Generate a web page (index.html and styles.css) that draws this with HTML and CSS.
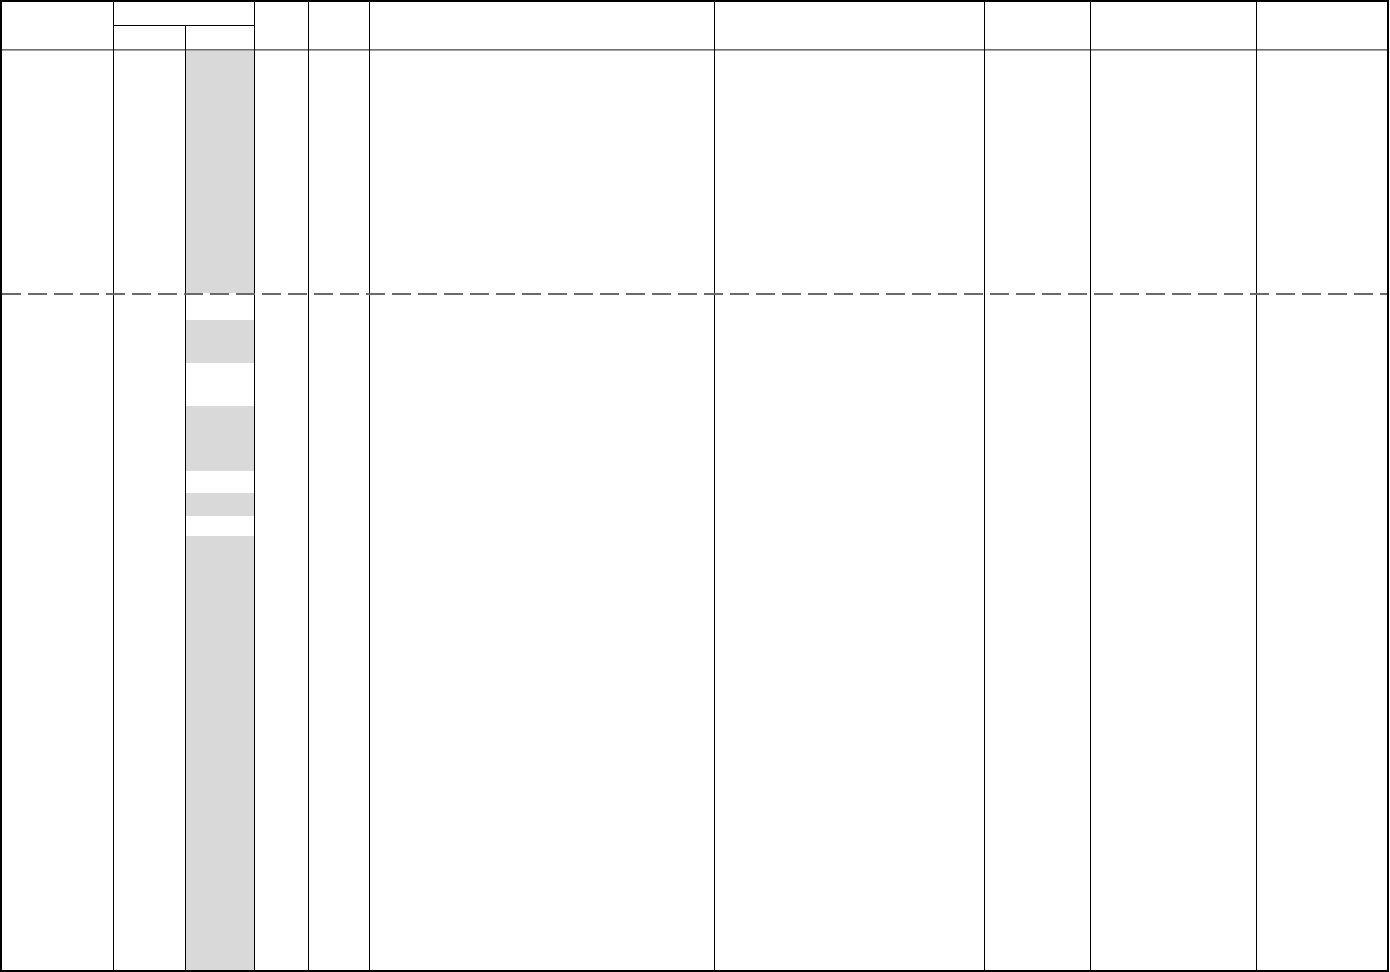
FILE: index.html
```html
<!DOCTYPE html>
<html lang="en">
<head>
    <meta charset="UTF-8">
    <meta name="viewport" content="width=device-width, initial-scale=1.0">
    <title>Sheet</title>
    <link rel="stylesheet" href="styles.css">
</head>
<body>
    <div id="sheet">
        <div class="headGrid">
            <div class="hcell tall first"></div>
            <div class="hcell group"></div>
            <div class="hcell tall"></div>
            <div class="hcell tall"></div>
            <div class="hcell tall"></div>
            <div class="hcell tall"></div>
            <div class="hcell tall"></div>
            <div class="hcell tall"></div>
            <div class="hcell tall"></div>
            <div class="hcell sub"></div>
            <div class="hcell sub"></div>
        </div>

        <div class="bodyGrid">
            <div class="col first"></div>
            <div class="col"></div>
            <div class="col shade">
                <div class="band"></div>
                <div class="band on"></div>
                <div class="band"></div>
                <div class="band on"></div>
                <div class="band"></div>
                <div class="band on"></div>
                <div class="band"></div>
                <div class="band on"></div>
                <div class="band"></div>
                <div class="band on"></div>
            </div>
            <div class="col"></div>
            <div class="col"></div>
            <div class="col"></div>
            <div class="col"></div>
            <div class="col"></div>
            <div class="col"></div>
            <div class="col"></div>
        </div>

        <div class="cutLine"></div>
    </div>
</body>
</html>
```

FILE: styles.css
```css
*{
    box-sizing: border-box;
}

body{
    margin: 0;
    padding: 0;
    background-color: #ffffff;
    font-family: 'Liberation Sans', Arial, sans-serif;
}

#sheet{
    position: relative;
    width: 1389px;
    height: 972px;
    border: 2px solid #000000;
    display: flex;
    flex-direction: column;
}

.headGrid,
.bodyGrid{
    display: grid;
    grid-template-columns: 111px 72px 69px 54px 61px 345px 270px 106px 166px 131px;
}

.headGrid{
    grid-template-rows: 24px 23px;
    height: 47px;
}

.hcell{
    border-left: 1px solid #000000;
}

.hcell.first,
.col.first{
    border-left: none;
}

.tall{
    grid-row: span 2;
}

.group{
    grid-column: span 2;
    border-bottom: 1px solid #000000;
}

.bodyGrid{
    flex: 1;
}

.col{
    border-left: 1px solid #000000;
    background:
        linear-gradient(#6f6f6f, #6f6f6f) 0 0 / 100% 1px no-repeat,
        linear-gradient(#a4a4a4, #a4a4a4) 0 1px / 100% 1px no-repeat;
}

.shade{
    display: grid;
    grid-template-rows: 2px 242px 27px 43px 43px 65px 22px 23px 20px 1fr;
}

.band.on{
    background-color: #d9d9d9;
}

.cutLine{
    position: absolute;
    left: 0;
    right: 0;
    top: 291px;
    height: 2px;
    background: repeating-linear-gradient(to right, #6a6a6a 0 19px, transparent 19px 26px);
}
```
